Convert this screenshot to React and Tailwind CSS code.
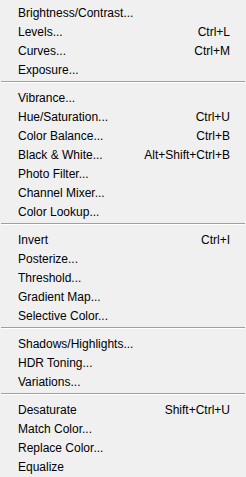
import React from "react";

// Photoshop-style Image > Adjustments menu
const groups = [
  [
    ["Brightness/Contrast...", ""],
    ["Levels...", "Ctrl+L"],
    ["Curves...", "Ctrl+M"],
    ["Exposure...", ""],
  ],
  [
    ["Vibrance...", ""],
    ["Hue/Saturation...", "Ctrl+U"],
    ["Color Balance...", "Ctrl+B"],
    ["Black & White...", "Alt+Shift+Ctrl+B"],
    ["Photo Filter...", ""],
    ["Channel Mixer...", ""],
    ["Color Lookup...", ""],
  ],
  [
    ["Invert", "Ctrl+I"],
    ["Posterize...", ""],
    ["Threshold...", ""],
    ["Gradient Map...", ""],
    ["Selective Color...", ""],
  ],
  [
    ["Shadows/Highlights...", ""],
    ["HDR Toning...", ""],
    ["Variations...", ""],
  ],
  [
    ["Desaturate", "Shift+Ctrl+U"],
    ["Match Color...", ""],
    ["Replace Color...", ""],
    ["Equalize", ""],
  ],
];

function Row({ label, shortcut }) {
  return (
    <div className="flex h-[19px] items-center justify-between pl-[18px] pr-[16px] leading-none">
      <span>{label}</span>
      {shortcut && <span>{shortcut}</span>}
    </div>
  );
}

export default function App() {
  return (
    <div
      className="h-[477px] w-[246px] overflow-hidden bg-[#f0f0f0] pt-[3px] text-[12px] text-black"
      style={{ fontFamily: '"Liberation Sans", Arial, sans-serif' }}
    >
      {groups.map((g, i) => (
        <div key={i}>
          {i > 0 && (
            <div className="h-[9px] pt-[2px] pl-[1px] pr-[1px]">
              <div className="h-px bg-[#a0a0a0]" />
              <div className="h-px bg-white" />
            </div>
          )}
          {g.map(([label, shortcut]) => (
            <Row key={label} label={label} shortcut={shortcut} />
          ))}
        </div>
      ))}
    </div>
  );
}
